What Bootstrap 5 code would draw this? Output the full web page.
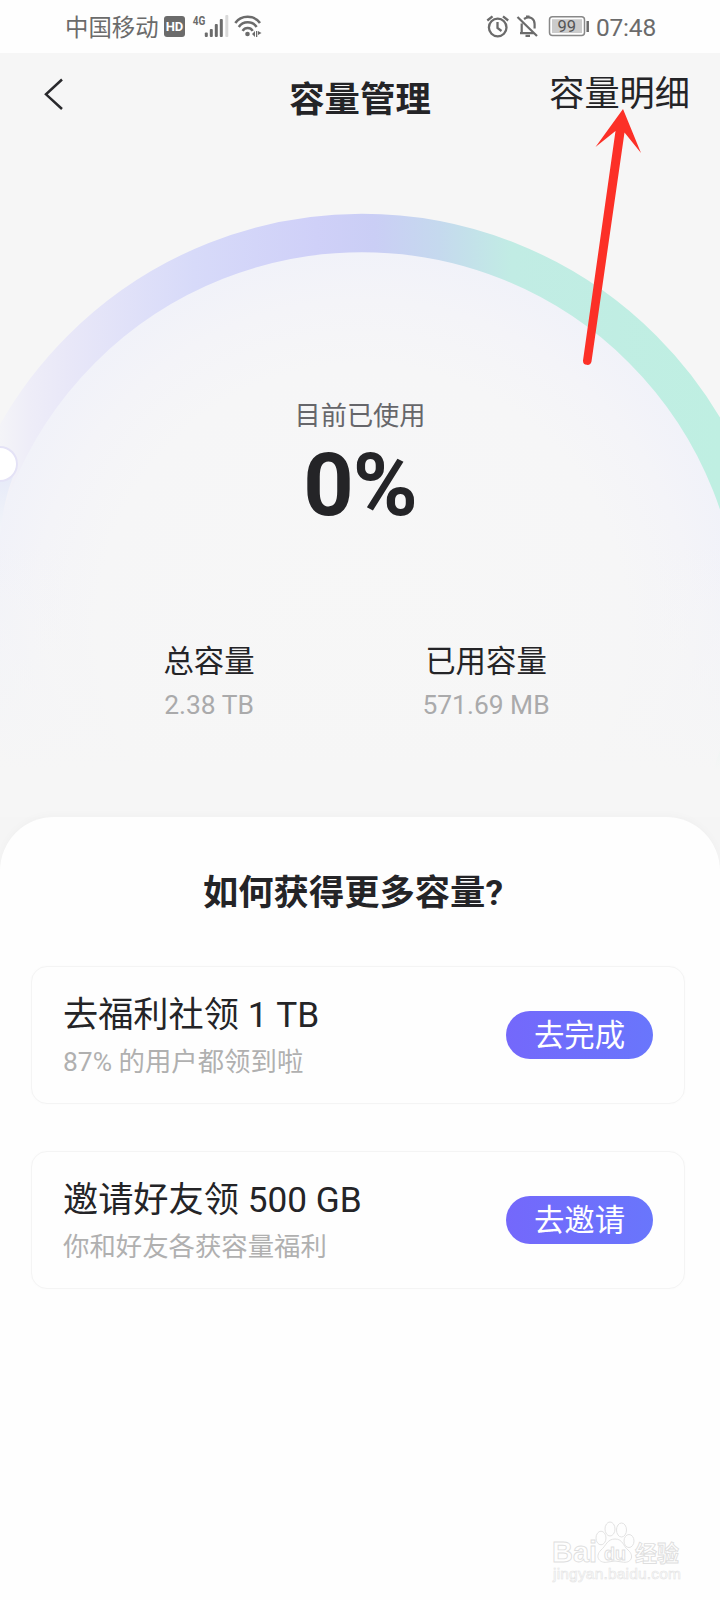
<!DOCTYPE html>
<html lang="zh-CN">
<head>
<meta charset="utf-8">
<meta name="viewport" content="width=device-width, initial-scale=1">
<title>容量管理</title>
<link href="https://cdn.jsdelivr.net/npm/bootstrap@5.3.0/dist/css/bootstrap.min.css" rel="stylesheet">
<style>
body{font-family:Roboto,"Noto Sans CJK SC",sans-serif;color:#242427;background:#fdfdfd;width:720px;height:1600px;overflow:hidden}
svg{display:block;flex:none}
.statusbar{height:53px;padding:1px 64px 0 65px;color:#6b6b6b;background:#fefefe}
.carrier{font-size:23.4px;line-height:50px;padding-top:2px}
.clock{font-size:24.5px;line-height:50px;padding-top:1px;letter-spacing:-.2px}
.usage{height:764px;background:#f6f6f6}
.gauge{top:-53px;left:0;z-index:0}
.topbar{height:92px;z-index:1}
.topbar h1{font-size:35.4px;line-height:94px;width:142px;margin:0}
.detail{font-size:35.2px;line-height:82px;color:#242427}
.now{font-size:26.2px;line-height:36px;color:#66666a;margin-top:253px}
.percent{font-size:88px;line-height:100px;font-weight:700;letter-spacing:-1px;margin-top:1px}
.stats{padding-left:79px;padding-right:87px;margin-top:107px}
.stats dt{font-size:30.4px;line-height:40px;font-weight:400}
.stats dd{font-size:26.4px;line-height:36px;color:#aaaaab;margin:5px 0 0}
.sheet{height:783px;border-radius:54px 54px 0 0;background:#fefefe;box-shadow:0 -2px 8px rgba(0,0,0,.025)}
.sheetwrap{background:#f5f5f5}
.sheet h2{font-size:35.3px;line-height:50px;padding-top:51px;margin:0 14px 48px 0}
.task{height:138px;margin:0 35px 47px 31px;padding:0 31px 0 31px;border:1px solid #f4f4f4;border-radius:16px;background:#fefefe;box-shadow:0 0 3px rgba(0,0,0,.02)}
.task h3{font-size:35.2px;line-height:44px;font-weight:400;margin:26px 0 0}
.task p{font-size:26.4px;line-height:36px;color:#b0b0b0;margin:7px 0 0}
.go{width:147px;height:48px;margin-top:44px;padding:0;border:0;font-size:30.4px;line-height:45px;color:#fff;background:linear-gradient(90deg,#7468fb,#6976fc)}
.pointer{left:0;top:0;z-index:3;pointer-events:none}
.logo{right:0;bottom:0}
</style>
</head>
<body class="position-relative">
<header class="statusbar d-flex align-items-center justify-content-between">
  <div class="d-flex align-items-center">
    <span class="carrier">中国移动</span>
    <svg width="104" height="30" viewBox="160 12 104 30" style="margin-left:1px" fill="#6b6b6b" font-family="Roboto">
      <rect x="164" y="16" width="21" height="21" rx="3"/>
      <text x="165.8" y="31.3" font-size="13" font-weight="700" fill="#fff" textLength="17.5">HD</text>
      <text x="192.7" y="24.8" font-size="13" font-weight="700" textLength="12.6" lengthAdjust="spacingAndGlyphs">4G</text>
      <g><rect x="204.8" y="32.5" width="3" height="4.5" rx="1"/><rect x="209.8" y="29" width="3" height="8" rx="1"/><rect x="214.8" y="24" width="3" height="13" rx="1"/><rect x="219.8" y="19" width="3" height="18" rx="1"/><rect x="225.3" y="15" width="3" height="22" rx="1" fill="#d9d9d9"/></g>
      <g fill="none" stroke="#6b6b6b" stroke-width="2.5"><path d="M235.3 23C241 14.8 254.400 14.800 260 23M238.800 27C243 20.700 252.500 20.700 256.600 27M242.600 30.800C245 27 250.400 27 252.700 30.800"/></g>
      <circle cx="247.500" cy="34" r="2.300"/><path d="M252 34l3-3v6zM256 31h1.300v6H256zM258 31l3.500 2-3.500 2z"/>
    </svg>
  </div>
  <div class="d-flex align-items-center">
    <svg width="106" height="30" viewBox="483 12 106 30" style="margin-right:7px" fill="none" stroke="#6b6b6b" stroke-width="2.300">
      <circle cx="497.700" cy="27.500" r="8.800"/><path d="M497.500 22v6l4 3M487.300 20.500l5.200-4.200M503 16.300l5.200 4.200"/>
      <path d="M517.500 17l19.500 19M520 33.200h14M521.700 32.500V23.500M524 19c6-4 10.600 0 10.600 5v4.500" stroke-width="2.200"/><path d="M525.500 35.800h4.500M526 16.700h3.500"/>
      <rect x="549.500" y="16.800" width="35" height="18.600" rx="3" stroke-width="1.500" stroke="#888"/><rect x="552" y="19.200" width="30" height="13.800" fill="#cbcbcb" stroke="none"/>
      <path d="M587.700 21v11" stroke-width="2.500"/><text x="557.500" y="32.300" fill="#555" stroke="none" font-family="Roboto" font-size="16.500">99</text>
    </svg>
    <span class="clock">07:48</span>
  </div>
</header>

<main>
<section class="usage position-relative text-center">
  <svg class="gauge position-absolute" width="720" height="817" viewBox="0 0 720 817" aria-hidden="true">
    <defs>
      <linearGradient id="ring" gradientUnits="userSpaceOnUse" x1="0" y1="0" x2="720" y2="0"><stop offset="0" stop-color="#f4f4f8"/><stop offset=".04" stop-color="#eeedf8"/><stop offset=".1" stop-color="#e8e7f8"/><stop offset=".27" stop-color="#d7daf9"/><stop offset=".44" stop-color="#cfd0f8"/><stop offset=".52" stop-color="#cacef5"/><stop offset=".61" stop-color="#c5d9ee"/><stop offset=".71" stop-color="#c1ece4"/><stop offset="1" stop-color="#bfefe2"/></linearGradient>
      <radialGradient id="disc" gradientUnits="userSpaceOnUse" cx="362" cy="630" r="379"><stop offset="0" stop-color="#f7f7f7"/><stop offset=".7" stop-color="#f6f6f7"/><stop offset=".87" stop-color="#f4f4f8"/><stop offset="1" stop-color="#f1f2f9"/></radialGradient>
      <linearGradient id="fade" x1="0" y1="0" x2="0" y2="1"><stop offset="0" stop-color="#f6f6f6" stop-opacity="0"/><stop offset="1" stop-color="#f6f6f6"/></linearGradient>
      <linearGradient id="tail" x1="0" y1="0" x2="0" y2="1"><stop offset="0" stop-color="#e5e9f8"/><stop offset="1" stop-color="#f3f5f9"/></linearGradient>
    </defs>
    <circle cx="362" cy="630" r="379" fill="url(#disc)"/>
    <circle cx="362" cy="630" r="397" fill="none" stroke="url(#ring)" stroke-width="38.500"/>
    <path d="M0 470H16Q5 492 0 535z" fill="url(#tail)"/>
    <rect y="540" width="720" height="230" fill="url(#fade)"/><rect y="769" width="720" height="50" fill="#f6f6f6"/>
    <circle cx="0" cy="464" r="18" fill="#e4e2f6"/><circle cx="0" cy="464" r="16" fill="#fff"/>
  </svg>

  <nav class="topbar position-relative d-flex align-items-start justify-content-between">
    <svg width="240" height="70" viewBox="0 53 240 70" fill="none" stroke="#29292c" stroke-width="2.500"><path d="M62 79.500L46 94.300L62 109"/></svg>
    <h1 class="fw-bold text-nowrap">容量管理</h1>
    <a class="detail text-decoration-none text-end text-nowrap" href="#" style="width:240px;padding-right:30px">容量明细</a>
  </nav>

  <div class="position-relative">
    <div class="now">目前已使用</div>
    <div class="percent">0%</div>
    <dl class="stats row g-0 mb-0">
      <div class="col-auto" style="width:260px"><dt>总容量</dt><dd>2.38 TB</dd></div>
      <div class="col"><dt>已用容量</dt><dd>571.69 MB</dd></div>
    </dl>
  </div>
</section>

<div class="sheetwrap">
<section class="sheet position-relative">
  <h2 class="fw-bold text-center">如何获得更多容量?</h2>
  <article class="task d-flex align-items-start justify-content-between">
    <div><h3>去福利社领 1 TB</h3><p>87% 的用户都领到啦</p></div>
    <button class="btn go rounded-pill">去完成</button>
  </article>
  <article class="task d-flex align-items-start justify-content-between">
    <div><h3>邀请好友领 500 GB</h3><p>你和好友各获容量福利</p></div>
    <button class="btn go rounded-pill">去邀请</button>
  </article>
  <svg class="logo position-absolute" width="190" height="100" viewBox="530 1500 190 100" fill="#fefefe" stroke="#dfdfdf" stroke-width=".9">
    <g font-family="Liberation Sans" font-weight="700"><text x="552" y="1562" font-size="29" textLength="45" lengthAdjust="spacingAndGlyphs">Bai</text></g>
    <ellipse cx="601" cy="1538" rx="5" ry="6.800"/><ellipse cx="610" cy="1529" rx="5" ry="7"/><ellipse cx="621.500" cy="1530" rx="5" ry="7"/><ellipse cx="629" cy="1541" rx="5" ry="6.500"/>
    <path d="M615 1539C607 1539 606 1546 601 1550C594 1557 600 1564 608 1562Q615 1560 622 1562C631 1564 635 1556 628 1550C623 1546 623 1539 615 1539z"/>
    <text x="604" y="1559.500" font-family="Liberation Sans" font-weight="700" font-size="18" textLength="22">du</text>
    <text x="635" y="1560.500" font-family="Noto Sans CJK SC" font-weight="700" font-size="22" textLength="44">经验</text>
    <text x="553" y="1579" font-family="Liberation Sans" font-size="15.500" textLength="128" stroke-width=".6" stroke="#e4e4e4">jingyan.baidu.com</text>
  </svg>
</section>
</div>
</main>

<svg class="pointer position-absolute" width="720" height="400" viewBox="0 0 720 400" fill="#fc3027" aria-hidden="true"><path d="M623 109L595.500 147L615.500 131L583 360.500A4.300 4.300 0 0 0 591.500 361.500L624.500 132.500L641 153z"/></svg>
<script src="https://cdn.jsdelivr.net/npm/bootstrap@5.3.0/dist/js/bootstrap.bundle.min.js"></script>
</body>
</html>
